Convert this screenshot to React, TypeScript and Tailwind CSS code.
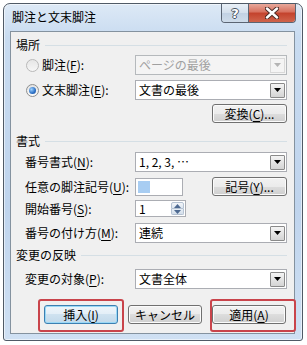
import React from "react";

const jp = "font-['Noto_Sans_CJK_JP','Noto_Sans',sans-serif]";

function K({ k }: { k: string }) {
  return <span className="underline underline-offset-[2px] decoration-[1px]">{k}</span>;
}

function DropArrow({ disabled }: { disabled?: boolean }) {
  return (
    <div
      className={
        disabled
          ? "mr-[1px] flex h-[15px] w-[15px] items-center justify-center border border-[#d9d9d9] bg-[#f4f4f4]"
          : "mr-[1px] flex h-[15px] w-[15px] items-center justify-center rounded-[1px] border border-[#8a8a8a] bg-[linear-gradient(#f4f4f4,#e4e4e4_50%,#d4d4d4)]"
      }
    >
      <svg width="7" height="4" viewBox="0 0 7 4">
        <path d="M0 0h7L3.5 4z" fill={disabled ? "#b4b4b4" : "#000"} />
      </svg>
    </div>
  );
}

function Combo({ value, disabled }: { value: string; disabled?: boolean }) {
  return (
    <div
      className={
        disabled
          ? "flex h-[20px] w-[152px] items-center border border-[#b5b9bc] bg-[#f4f4f4] pl-[3px] text-[#a0a0a0]"
          : "flex h-[20px] w-[152px] items-center border border-[#abadb3] bg-white pl-[3px] text-black"
      }
    >
      <span className="flex-1 leading-none">{value}</span>
      <DropArrow disabled={disabled} />
    </div>
  );
}

function Btn({ children, w, def }: { children: React.ReactNode; w: string; def?: boolean }) {
  return (
    <div
      className={
        (def
          ? "border-[#3c7fb1] bg-[linear-gradient(#eef6fb,#e3eef7_50%,#cfe2f0_50%,#c2d9ea)] shadow-[inset_0_0_0_1px_#9ad8f6] "
          : "border-[#707070] bg-[linear-gradient(#f2f2f2,#ebebeb_50%,#dddddd_50%,#cfcfcf)] shadow-[inset_0_0_0_1px_#fbfbfb] ") +
        w +
        " flex h-[19px] items-center justify-center rounded-[3px] border leading-none"
      }
    >
      {children}
    </div>
  );
}

function Header({ text }: { text: string }) {
  return (
    <div className="flex h-[14px] items-center">
      <span className="leading-none">{text}</span>
      <div className="ml-[5px] h-px flex-1 bg-[#d5dfe5]" />
    </div>
  );
}

function Radio({ checked }: { checked?: boolean }) {
  return (
    <div
      className={
        checked
          ? "flex h-[13px] w-[13px] items-center justify-center rounded-full border border-[#8e8f8f] bg-[linear-gradient(#e2e2e2,#fbfbfb)]"
          : "flex h-[13px] w-[13px] items-center justify-center rounded-full border border-[#b9b9b9] bg-[linear-gradient(#e6e6e6,#f6f6f6)]"
      }
    >
      {checked && (
        <div className="h-[7px] w-[7px] rounded-full bg-[radial-gradient(circle_at_35%_35%,#9ed2ff,#2b6fc4_60%,#1b4f99)]" />
      )}
    </div>
  );
}

function Row({ label, children, radio, checked, h = "h-[20px]" }: { label: React.ReactNode; children: React.ReactNode; radio?: boolean; checked?: boolean; h?: string }) {
  return (
    <div className={"flex items-center " + h}>
      {radio ? (
        <div className="flex w-[119px] items-center pl-[10px]">
          <Radio checked={checked} />
          <span className="ml-[3px] leading-none">{label}</span>
        </div>
      ) : (
        <div className="w-[119px] pl-[9px] leading-none">{label}</div>
      )}
      {children}
    </div>
  );
}

export default function App() {
  return (
    <div className={"relative h-[345px] w-[307px] bg-white pl-[3px] pt-[3px] text-[12px] text-black " + jp}>
      <div className="flex h-[338px] w-[300px] flex-col rounded-t-[7px] rounded-b-[3px] border border-[#505a66] bg-[linear-gradient(180deg,#dde9f6,#c8dbf0_10%,#bfd4ed_60%,#cfe0f3)] shadow-[inset_0_0_0_1px_rgba(255,255,255,0.55)]">
        {/* title bar */}
        <div className="flex h-[27px] items-start pl-[8px] pr-[6px]">
          <span className="mt-[7px] flex-1 leading-none">脚注と文末脚注</span>
          <div className="flex h-[19px] overflow-hidden rounded-b-[4px] border border-t-0 border-[#5b6573]">
            <div className="flex w-[27px] items-center justify-center border-r border-[#5b6573] bg-[linear-gradient(#e9f0f7,#d3dfec_50%,#c1d1e3_50%,#cfdcea)]">
              <span className="font-['DejaVu_Sans',sans-serif] text-[13px] font-bold leading-none text-white [text-shadow:1px_0_#4a5562,-1px_0_#4a5562,0_1px_#4a5562,0_-1px_#4a5562]">?</span>
            </div>
            <div className="flex w-[46px] items-center justify-center bg-[linear-gradient(#e8a89a,#d7705e_45%,#c3422c_50%,#d0644c)]">
              <svg width="14" height="12" viewBox="0 0 14 12">
                <path d="M2 1.5l10 9M12 1.5l-10 9" stroke="#4b2a24" strokeWidth="4.4" strokeLinecap="round" />
                <path d="M2 1.5l10 9M12 1.5l-10 9" stroke="#fff" strokeWidth="2.4" strokeLinecap="round" />
              </svg>
            </div>
          </div>
        </div>

        {/* client area */}
        <div className="ml-[6px] flex h-[303px] w-[285px] flex-col border border-[#84929f] bg-[#f0f0f0] pl-[5px] pr-[7px]">
          <div className="mt-[6px]">
            <Header text="場所" />
          </div>
          <div className="mt-[3px]">
            <Row radio label={<>脚注(<K k="F" />):</>}>
              <Combo value="ページの最後" disabled />
            </Row>
          </div>
          <div className="mt-[5px]">
            <Row radio checked label={<>文末脚注(<K k="E" />):</>}>
              <Combo value="文書の最後" />
            </Row>
          </div>
          <div className="mt-[4px] flex justify-end">
            <Btn w="w-[75px]">
              変換(<K k="C" />)...
            </Btn>
          </div>

          <div className="mt-[11px]">
            <Header text="書式" />
          </div>
          <div className="mt-[4px]">
            <Row label={<>番号書式(<K k="N" />):</>}>
              <Combo value="1, 2, 3, …" />
            </Row>
          </div>
          <div className="mt-[5px]">
            <Row h="h-[19px]" label={<>任意の脚注記号(<K k="U" />):</>}>
              <div className="flex h-[18px] w-[48px] items-center border border-[#abadb3] bg-white pl-[2px]">
                <div className="h-[12px] w-[12px] bg-[#a8cdf2]" />
              </div>
              <div className="flex-1" />
              <Btn w="w-[75px]">
                記号(<K k="Y" />)...
              </Btn>
            </Row>
          </div>
          <div className="mt-[4px]">
            <Row h="h-[17px]" label={<>開始番号(<K k="S" />):</>}>
              <div className="flex h-[17px] w-[51px] items-center border border-[#abadb3] bg-white pl-[3px]">
                <span className="flex-1 leading-none">1</span>
                <div className="mr-[1px] flex h-[13px] w-[13px] flex-col">
                  <div className="flex flex-1 items-center justify-center rounded-t-[2px] border border-[#b5c2d2] bg-[linear-gradient(#f3f6fa,#dce5ef)]">
                    <svg width="7" height="4" viewBox="0 0 7 4">
                      <path d="M0 4h7L3.5 0z" fill="#4e6a92" />
                    </svg>
                  </div>
                  <div className="flex flex-1 items-center justify-center rounded-b-[2px] border border-t-0 border-[#b5c2d2] bg-[linear-gradient(#e6edf5,#d4dfeb)]">
                    <svg width="7" height="4" viewBox="0 0 7 4">
                      <path d="M0 0h7L3.5 4z" fill="#4e6a92" />
                    </svg>
                  </div>
                </div>
              </div>
            </Row>
          </div>
          <div className="mt-[6px]">
            <Row label={<>番号の付け方(<K k="M" />):</>}>
              <Combo value="連続" />
            </Row>
          </div>

          <div className="mt-[5px]">
            <Header text="変更の反映" />
          </div>
          <div className="mt-[7px]">
            <Row label={<>変更の対象(<K k="P" />):</>}>
              <Combo value="文書全体" />
            </Row>
          </div>

          <div className="ml-[28px] mt-[16px] flex gap-[10px]">
            <Btn w="w-[74px]" def>
              挿入(<K k="I" />)
            </Btn>
            <Btn w="w-[74px]">キャンセル</Btn>
            <Btn w="w-[74px]">
              適用(<K k="A" />)
            </Btn>
          </div>
        </div>
      </div>

      {/* annotation boxes */}
      <div className="absolute left-[38px] top-[299px] h-[33px] w-[86px] rounded-[3px] border-2 border-[#c9444b]" />
      <div className="absolute left-[210px] top-[299px] h-[33px] w-[86px] rounded-[3px] border-2 border-[#c9444b]" />
    </div>
  );
}
